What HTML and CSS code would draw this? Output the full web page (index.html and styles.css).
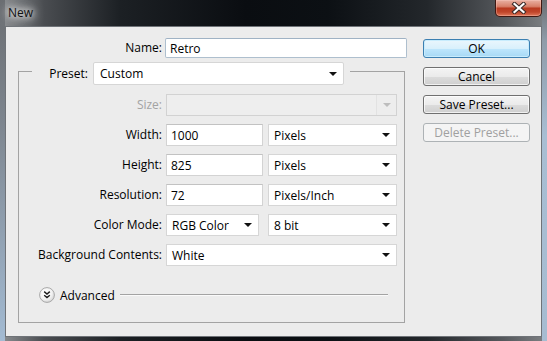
FILE: index.html
```html
<!DOCTYPE html>
<html lang="en">

<head>
  <meta charset="UTF-8">
  <meta name="viewport" content="width=device-width, initial-scale=1.0">
  <title>New</title>
  <link rel="stylesheet" href="styles.css">
</head>

<body>
  <div class="window">
    <div class="titlebar">
      <span class="title">New</span>
      <div class="close">
        <svg width="16" height="12" viewBox="0 0 16 12">
          <path d="M3.5 2 L12.5 10 M12.5 2 L3.5 10" stroke="#3a2a28" stroke-width="4.2" stroke-linecap="square" fill="none" />
          <path d="M3.5 2 L12.5 10 M12.5 2 L3.5 10" stroke="#fff" stroke-width="2.2" stroke-linecap="square" fill="none" />
        </svg>
      </div>
    </div>

    <div class="client">
      <div class="form">
        <div class="name-row">
          <span class="label name-label">Name:</span>
          <input class="field name" type="text" value="Retro">
        </div>

        <div class="group">
          <div class="group-head">
            <span class="label head-label">Preset:</span>
            <div class="dropdown preset"><span>Custom</span><i class="arrow"></i></div>
          </div>

          <div class="rows">
            <span class="label disabled">Size:</span>
            <div class="dropdown off full"><span></span><i class="off-btn"><i class="arrow"></i></i></div>

            <span class="label">Width:</span>
            <div class="pair">
              <input class="field num" type="text" value="1000">
              <div class="dropdown unit"><span>Pixels</span><i class="arrow"></i></div>
            </div>

            <span class="label">Height:</span>
            <div class="pair">
              <input class="field num" type="text" value="825">
              <div class="dropdown unit"><span>Pixels</span><i class="arrow"></i></div>
            </div>

            <span class="label">Resolution:</span>
            <div class="pair">
              <input class="field num" type="text" value="72">
              <div class="dropdown unit"><span>Pixels/Inch</span><i class="arrow"></i></div>
            </div>

            <span class="label">Color Mode:</span>
            <div class="pair wide-gap">
              <div class="dropdown mode"><span>RGB Color</span><i class="arrow"></i></div>
              <div class="dropdown unit"><span>8 bit</span><i class="arrow"></i></div>
            </div>

            <span class="label">Background Contents:</span>
            <div class="dropdown full"><span>White</span><i class="arrow"></i></div>
          </div>

          <div class="advanced">
            <svg class="adv-icon" width="16" height="16" viewBox="0 0 16 16">
              <defs>
                <radialGradient id="knob" cx="0.4" cy="0.35" r="0.7">
                  <stop offset="0" stop-color="#ffffff" />
                  <stop offset="0.6" stop-color="#f2f2f2" />
                  <stop offset="1" stop-color="#d2d2d2" />
                </radialGradient>
              </defs>
              <circle cx="8" cy="8" r="7.4" fill="url(#knob)" stroke="#a8a8a8" stroke-width="1" />
              <path d="M5.2 4.6 L8 7 L10.8 4.6 M5.2 8.2 L8 10.6 L10.8 8.2" stroke="#1a1a1a" stroke-width="1.4" fill="none" />
            </svg>
            <span class="adv-text">Advanced</span>
            <div class="adv-line"></div>
          </div>
        </div>
      </div>

      <div class="buttons">
        <button class="button default">OK</button>
        <button class="button">Cancel</button>
        <button class="button">Save Preset...</button>
        <button class="button" disabled>Delete Preset...</button>
      </div>
    </div>
  </div>
</body>

</html>
```

FILE: styles.css
```css
body {
  margin: 0;
  background-color: #0d1014;
  font-family: "Open Sans", "Noto Sans", sans-serif;
  font-size: 12px;
  color: #000;
}

.window {
  width: 547px;
  height: 341px;
  overflow: hidden;
  background:
    linear-gradient(to bottom, #6a6d71 0, #7d858e 35%, #a3bbd3 100%) left top / 5px 100% no-repeat,
    linear-gradient(to bottom, #6b6e72 0, #8f9ca9 12%, #a8bed3 40%, #a6bcd1 100%) right top / 5px 100% no-repeat,
    linear-gradient(to right, #8e9194 0, #4a4d51 8%, #1c2024 22%, #0a0d11 45%, #0c1014 60%, #23272b 78%, #55585c 92%, #7e8184 100%);
}

/* title bar */

.titlebar {
  height: 26px;
  display: flex;
  justify-content: space-between;
  align-items: flex-start;
}

.title {
  padding-left: 8px;
  line-height: 26px;
  color: #111;
  text-shadow: 0 0 6px #fff, 0 0 10px #fff, 0 0 14px rgba(255, 255, 255, 0.8);
}

.close {
  width: 45px;
  height: 16px;
  margin-right: 5px;
  display: flex;
  align-items: center;
  justify-content: center;
  border: 1px solid #3f1812;
  border-top: none;
  border-radius: 0 0 5px 5px;
  background: linear-gradient(to bottom, #e9b0a2 0, #d8806a 40%, #b93a20 52%, #c0452a 75%, #e0785a 100%);
  box-shadow: inset 0 0 0 1px rgba(255, 210, 200, 0.35);
}

/* dialog body */

.client {
  height: 311px;
  margin: 0 5px;
  display: flex;
  gap: 18px;
  padding: 11px 11px 0 12px;
  box-sizing: border-box;
  border: 1px solid #6f7378;
  background-color: #ececec;
}

.form {
  width: 387px;
  flex-shrink: 0;
}

.label {
  text-align: right;
  white-space: nowrap;
  line-height: 22px;
}

.label.disabled {
  color: #a3a3a3;
}

.name-row {
  display: flex;
  gap: 3px;
  height: 20px;
  align-items: center;
}

.name-label {
  width: 144px;
  flex-shrink: 0;
}

.field {
  box-sizing: border-box;
  margin: 0;
  height: 22px;
  padding: 0 0 0 4px;
  border: 1px solid #d3d3d3;
  border-top-color: #c2c2c2;
  background: #fff;
  font: inherit;
  color: #000;
  outline: none;
}

.field.name {
  width: 242px;
  height: 20px;
  flex-shrink: 0;
  border-color: #aebfce;
  border-top-color: #9fb2c4;
  border-radius: 2px;
}

.field.num {
  width: 97px;
}

/* preset group */

.group {
  margin-top: 13px;
  border: 1px solid #a3a3a3;
  padding-bottom: 19px;
}

.group-head {
  width: fit-content;
  margin: -10px 0 0 13px;
  padding-right: 6px;
  display: flex;
  align-items: center;
  background-color: #ececec;
}

.head-label {
  width: 61px;
  padding-right: 5px;
  box-sizing: border-box;
}

.dropdown {
  box-sizing: border-box;
  height: 22px;
  padding: 0 6px 0 5px;
  display: flex;
  align-items: center;
  justify-content: space-between;
  border: 1px solid #d6d6d6;
  background: #fff;
  white-space: nowrap;
}

.dropdown.preset {
  width: 251px;
  height: 23px;
  padding-left: 6px;
  border-radius: 2px;
}

.dropdown.full {
  width: 231px;
}

.dropdown.unit {
  width: 129px;
}

.dropdown.mode {
  width: 93px;
}

.dropdown.off {
  padding: 0;
  background: #eeeeee;
  border-color: #d2d2d2;
}

.off-btn {
  width: 19px;
  height: 100%;
  display: flex;
  align-items: center;
  justify-content: center;
  border-left: 1px solid #e2e2e2;
  background: #ededed;
}

.off-btn .arrow {
  border-top-color: #bdbdbd;
}

.arrow {
  width: 0;
  height: 0;
  border-left: 4px solid transparent;
  border-right: 4px solid transparent;
  border-top: 4px solid #111;
}

.rows {
  margin-top: 9px;
  display: grid;
  grid-template-columns: 143px 231px;
  column-gap: 4px;
  row-gap: 8px;
}

.pair {
  display: flex;
  gap: 5px;
}

.pair.wide-gap {
  gap: 9px;
}

.advanced {
  margin: 21px 16px 0 20px;
  height: 16px;
  display: flex;
  align-items: center;
}

.adv-icon {
  flex-shrink: 0;
}

.adv-text {
  margin-left: 5px;
}

.adv-line {
  flex: 1;
  height: 1px;
  margin-left: 5px;
  background-color: #a3a3a3;
  border-bottom: 1px solid #fafafa;
}

/* buttons */

.buttons {
  width: 107px;
  padding-top: 1px;
  display: flex;
  flex-direction: column;
  gap: 9px;
}

.button {
  height: 19px;
  padding: 0;
  border: 1px solid #707070;
  border-radius: 3px;
  background: linear-gradient(to bottom, #f4f4f4 0, #ebebeb 50%, #dcdcdc 51%, #cfcfcf 100%);
  box-shadow: inset 0 0 0 1px rgba(255, 255, 255, 0.7);
  font: inherit;
  line-height: 16px;
  color: #000;
}

.button.default {
  border-color: #3c7fb1;
  background: linear-gradient(to bottom, #eaf6fd 0, #d9f0fc 50%, #bee6fd 51%, #a7d9f5 100%);
  box-shadow: inset 0 0 0 1px #c8ecfd;
}

.button:disabled {
  border-color: #adb2b5;
  background: #f4f4f4;
  box-shadow: none;
  color: #a0a0a0;
}
```
